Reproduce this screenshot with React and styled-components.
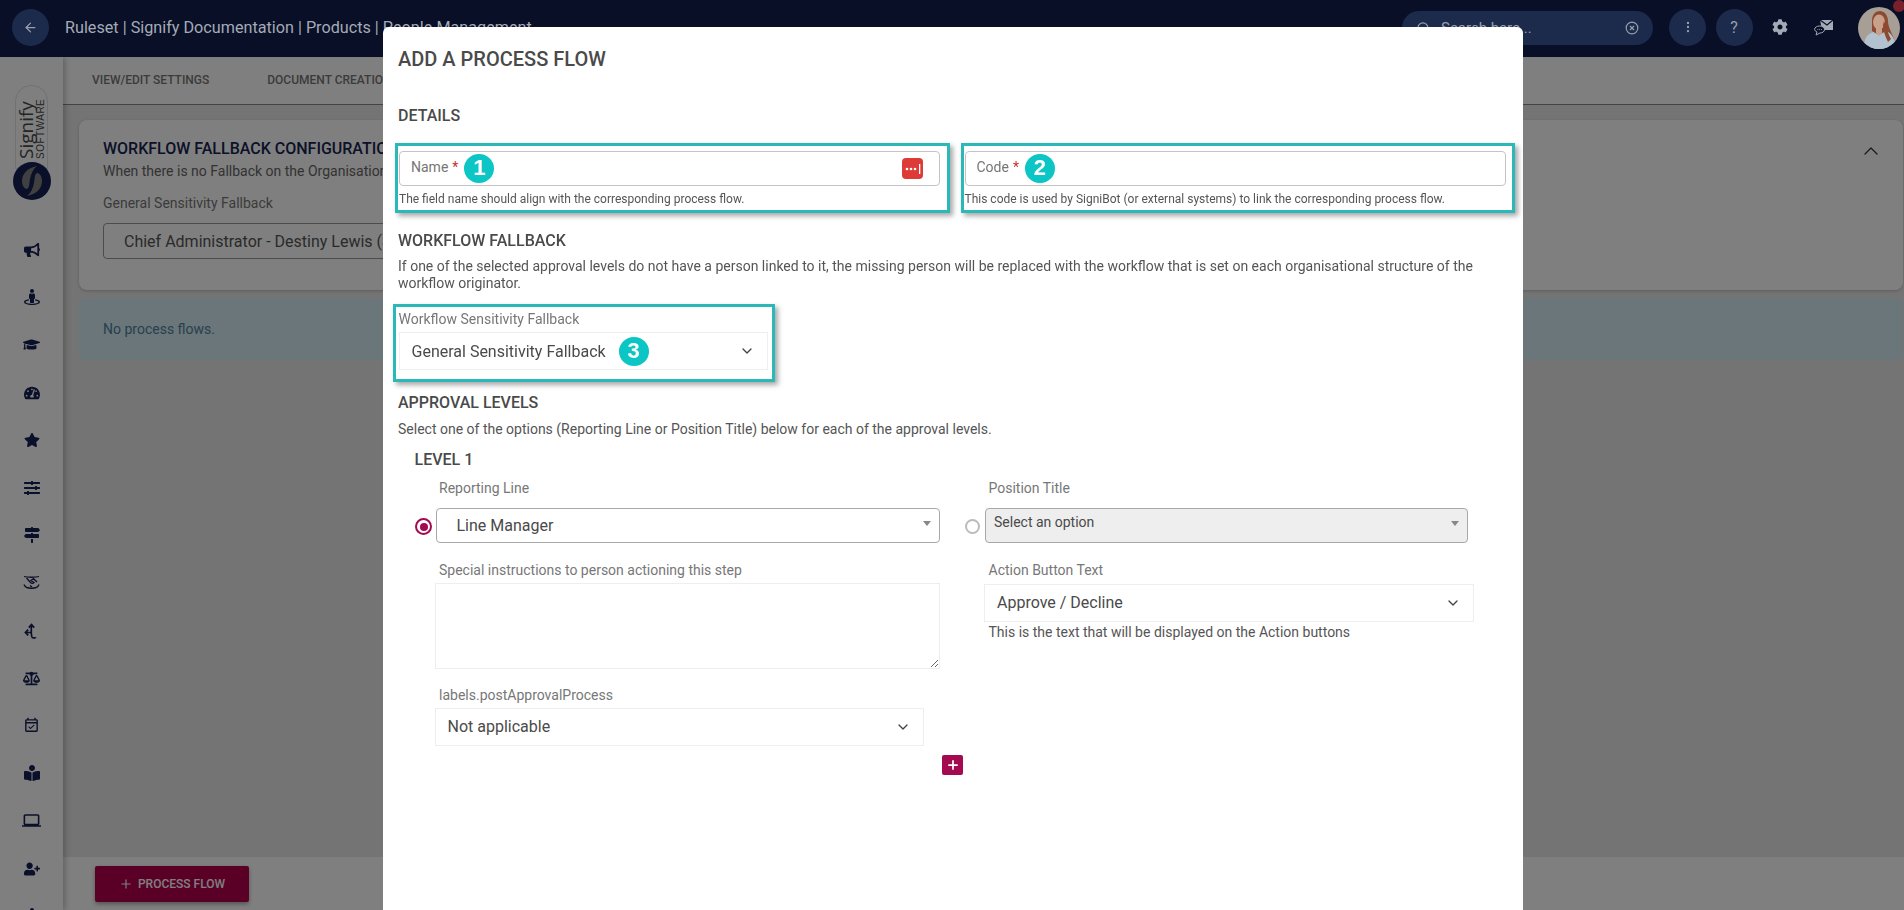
import React from 'react';
import styled, { createGlobalStyle } from 'styled-components';
import { ArrowLeft, Search, CircleX, EllipsisVertical, ChevronDown, ChevronUp, Plus } from 'lucide-react';
import {
  FaBullhorn, FaStreetView, FaGraduationCap, FaTachometerAlt, FaStar, FaSlidersH, FaMapSigns,
  FaBalanceScale, FaBookReader, FaUserPlus, FaCog,
} from 'react-icons/fa';
import { MdOutlineEventAvailable, MdLaptop } from 'react-icons/md';

const GlobalStyle = createGlobalStyle`
  html, body, #root {
    margin: 0;
    height: 100%;
  }
  body {
    overflow: hidden;
    font-family: Roboto, "Liberation Sans", sans-serif;
    background: #fff;
  }
  * {
    box-sizing: border-box;
  }
`;

const Page = styled.div`
  height: 910px;
  display: flex;
  flex-direction: column;
  overflow: hidden;
`;

/* sits above the backdrop: the reference keeps its bar brighter than the dimmed page */
const TopBar = styled.header`
  position: relative;
  z-index: 2;
  flex: none;
  height: 57px;
  background: #080f26;
  display: flex;
  align-items: center;
  padding: 0 0 3px 12px;
  color: #a4abb6;
`;

const RoundButton = styled.div`
  flex: none;
  width: 37px;
  height: 37px;
  border-radius: 50%;
  background: #1c2a4b;
  display: flex;
  align-items: center;
  justify-content: center;
  color: #98a0ae;
  font-size: 16px;
  margin-left: ${(p) => p.$left || 0}px;
`;

const PageTitle = styled.div`
  margin-left: 16px;
  font-size: 16.2px;
  white-space: nowrap;
`;

const SearchBox = styled.div`
  flex: none;
  margin-left: auto;
  margin-top: 2px;
  width: 251px;
  height: 34px;
  border-radius: 17px;
  background: #1c2a4b;
  display: flex;
  align-items: center;
  padding: 0 14px;
  gap: 10px;
  font-size: 15px;
  color: #98a0ae;
`;

const SearchText = styled.span`
  flex: 1;
`;

const BarIcon = styled.div`
  flex: none;
  margin-left: ${(p) => p.$left}px;
  display: flex;
  color: #a4abb6;
`;

const AvatarWrap = styled.div`
  position: relative;
  flex: none;
  width: 42px;
  height: 42px;
  margin-left: 24.5px;
  margin-right: 4px;
  margin-top: 2px;
`;

const NoticeDot = styled.span`
  position: absolute;
  top: -7px;
  right: -5px;
  width: 12px;
  height: 12px;
  border-radius: 50%;
  background: #7a1f2c;
`;

const Body = styled.div`
  flex: 1;
  min-height: 0;
  display: flex;
`;

const Sidebar = styled.nav`
  flex: none;
  width: 63px;
  background: #fff;
  display: flex;
  flex-direction: column;
  align-items: center;
  padding-top: 28px;
  box-shadow: 2px 0 6px rgba(0, 0, 0, 0.25);
  position: relative;
  z-index: 1;
`;

const LogoPill = styled.div`
  flex: none;
  width: 33px;
  height: 84px;
  border: 1px solid #e2e2e2;
  border-radius: 16px 16px 0 0;
  display: flex;
  flex-direction: row;
  justify-content: center;
  padding-top: 11px;
  color: #4a4a4a;
`;

const LogoWord = styled.div`
  writing-mode: vertical-rl;
  transform: rotate(180deg);
  white-space: nowrap;
  font-family: "Open Sans", sans-serif;
  font-size: 19px;
  line-height: 19px;
  height: 62px;
`;

const LogoSub = styled.div`
  writing-mode: vertical-rl;
  transform: rotate(180deg);
  white-space: nowrap;
  font-family: "Liberation Sans", sans-serif;
  font-size: 10px;
  letter-spacing: 0.5px;
  line-height: 10px;
  height: 62px;
`;

const LogoMark = styled.svg`
  width: 38px;
  height: 38px;
  margin-top: -7px;
  flex: none;
  position: relative;
`;

const NavList = styled.div`
  flex: none;
  margin-top: 26px;
  display: flex;
  flex-direction: column;
  align-items: center;
  color: #142052;
`;

const NavItem = styled.div`
  flex: none;
  height: 47.6px;
  display: flex;
  align-items: center;
  justify-content: center;
  font-size: 16px;
`;

const Main = styled.main`
  flex: 1;
  min-width: 0;
  display: flex;
  flex-direction: column;
  background: #e8e8e8;
`;

const Tabs = styled.div`
  flex: none;
  height: 48px;
  background: #fff;
  border-bottom: 1px solid #888;
  display: flex;
  align-items: center;
  padding-left: 29px;
  gap: 58px;
  font-size: 12px;
  font-weight: 500;
  color: #777;
  padding-bottom: 1px;
`;

const Content = styled.div`
  flex: 1;
  min-height: 0;
  padding: 15px 1px 0 16px;
`;

const ConfigCard = styled.section`
  height: 170px;
  background: #fff;
  border-radius: 8px;
  padding: 19px 20px 0 24px;
  box-shadow: 0 1px 3px rgba(0, 0, 0, 0.2);
  display: flex;
  justify-content: space-between;
`;

const CardTitle = styled.div`
  font-size: 16px;
  font-weight: 500;
  line-height: 20px;
  color: #16244f;
`;

const CardText = styled.div`
  margin-top: 4px;
  font-size: 14px;
  line-height: 17px;
  color: #666;
`;

const CardLabel = styled.div`
  margin-top: 15px;
  font-size: 14px;
  line-height: 17px;
  color: #777;
`;

const CardSelect = styled.div`
  margin-top: 11px;
  width: 620px;
  height: 36px;
  border: 1px solid #999;
  border-radius: 4px;
  padding-left: 20px;
  display: flex;
  align-items: center;
  font-size: 16px;
  color: #555;
`;

const InfoBox = styled.div`
  margin-top: 8px;
  height: 62px;
  background: #d4edf5;
  border-radius: 6px;
  padding-left: 24px;
  display: flex;
  align-items: center;
  font-size: 14px;
  color: #4f8098;
`;

const BottomBar = styled.div`
  flex: none;
  height: 53px;
  background: #fff;
  padding: 9px 0 0 32px;
`;

const PrimaryButton = styled.div`
  width: 154px;
  height: 36px;
  background: #b4004e;
  border-radius: 2px;
  color: #fff;
  font-size: 12px;
  font-weight: 500;
  display: flex;
  align-items: center;
  justify-content: center;
  gap: 5px;
  box-shadow: 0 2px 4px rgba(0, 0, 0, 0.35);
`;

const Backdrop = styled.div`
  position: fixed;
  inset: 0;
  z-index: 1;
  background: rgba(0, 0, 0, 0.5);
`;

const Modal = styled.div`
  position: fixed;
  z-index: 3;
  left: 383px;
  top: 27px;
  width: 1140px;
  height: 900px;
  background: #fff;
  border-radius: 6px 6px 0 0;
  padding: 21px 15px 0;
  color: #555;
`;

const ModalTitle = styled.h1`
  margin: 0;
  font-size: 20px;
  font-weight: 500;
  line-height: 22px;
  color: #4a4a4a;
`;

const SectionTitle = styled.h2`
  margin: ${(p) => p.$top}px 0 0;
  font-size: 16px;
  font-weight: 500;
  line-height: 20px;
  color: #4a4a4a;
  padding-left: ${(p) => p.$indent || 0}px;
`;

const Paragraph = styled.p`
  margin: ${(p) => p.$top}px 0 0;
  font-size: 14px;
  line-height: 17px;
  color: #555;
`;

const FieldRow = styled.div`
  margin-top: 16.5px;
  margin-left: -3.5px;
  display: flex;
  gap: 11px;
`;

const Highlight = styled.div`
  flex: none;
  border: 3px solid #2bb8b8;
  box-shadow: 3px 3px 5px rgba(0, 0, 0, 0.35);
  background: #fff;
  width: ${(p) => p.$width}px;
  height: ${(p) => p.$height}px;
  padding: ${(p) => p.$pad};
`;

const FallbackHighlight = styled(Highlight)`
  margin: 12px 0 0 -5.5px;
`;

const InputBox = styled.div`
  height: 35px;
  border: 1px solid #c4c4c4;
  border-radius: 4px;
  display: flex;
  align-items: center;
  padding-left: 11px;
  font-size: 14px;
  color: #757575;
`;

const FloatLabel = styled.span`
  margin-top: -3px;
`;

const Required = styled.span`
  color: #c9302c;
  margin-left: 4px;
`;

const Badge = styled.span`
  flex: none;
  width: 30px;
  height: 29px;
  border-radius: 50%;
  background: #0cc5c5;
  color: #fff;
  font-family: "Liberation Sans", sans-serif;
  font-size: 22px;
  font-weight: 700;
  display: flex;
  align-items: center;
  justify-content: center;
  margin-left: ${(p) => p.$left}px;
`;

const PasswordIcon = styled.svg`
  flex: none;
  width: 21px;
  height: 21px;
  margin-left: auto;
  margin-right: 16px;
`;

const HelpText = styled.div`
  margin-top: 6px;
  font-size: 12px;
  line-height: 15px;
  color: #555;
`;

const FieldLabel = styled.div`
  font-size: 14px;
  line-height: 17px;
  color: ${(p) => p.$color || '#777'};
  padding-left: ${(p) => p.$indent || 0}px;
  margin-top: ${(p) => p.$top || 0}px;
`;

const PlainSelect = styled.div`
  height: ${(p) => p.$height || 38}px;
  width: ${(p) => p.$width}px;
  margin-top: ${(p) => p.$top || 5}px;
  margin-left: ${(p) => p.$left || 0}px;
  border: 1px solid #eee;
  display: flex;
  align-items: center;
  padding: 0 ${(p) => p.$padRight || 12}px 0 ${(p) => p.$padLeft}px;
  font-size: 16px;
  color: #4a4a4a;
`;

const Chevron = styled(ChevronDown)`
  flex: none;
  margin-left: auto;
  color: #444;
`;

const LevelGrid = styled.div`
  margin: 9.5px 0 0 17px;
  display: flex;
  gap: 25px;
`;

const LevelColumn = styled.div`
  width: ${(p) => p.$width}px;
  flex: none;
`;

const RadioRow = styled.div`
  margin-top: 11.5px;
  display: flex;
  align-items: center;
`;

const Radio = styled.span`
  flex: none;
  width: ${(p) => p.$size}px;
  height: ${(p) => p.$size}px;
  border-radius: 50%;
  border: 2px solid ${(p) => (p.$on ? '#a30a50' : '#bbb')};
  margin-top: 2px;
  display: flex;
  align-items: center;
  justify-content: center;
  &::after {
    content: '';
    width: 8px;
    height: 8px;
    border-radius: 50%;
    background: ${(p) => (p.$on ? '#a30a50' : 'transparent')};
  }
`;

const BoxSelect = styled.div`
  height: 35px;
  width: ${(p) => p.$width}px;
  margin-left: ${(p) => p.$left}px;
  border: 1px solid #a8a8a8;
  border-radius: 4px;
  background: ${(p) => (p.$disabled ? '#eee' : '#fff')};
  display: flex;
  padding: ${(p) => (p.$disabled ? '5px 8px' : '0 8px 0 20px')};
  align-items: ${(p) => (p.$disabled ? 'flex-start' : 'center')};
  font-size: ${(p) => (p.$disabled ? 14 : 16)}px;
  line-height: 17px;
  color: #4a4a4a;
  position: relative;
`;

const Caret = styled.span`
  position: absolute;
  right: 8px;
  top: 12px;
  width: 0;
  height: 0;
  border-left: 4px solid transparent;
  border-right: 4px solid transparent;
  border-top: 5px solid #888;
`;

const NoteArea = styled.textarea`
  display: block;
  width: 505px;
  height: 85.5px;
  margin: 4.5px 0 0 19.5px;
  border: 1px solid #eee;
  background: #fff;
  outline: none;
`;

const AddButton = styled.div`
  width: 21px;
  height: 20px;
  margin: 9px 0 0 544px;
  background: #a30a50;
  border-radius: 2px;
  color: #fff;
  display: flex;
  align-items: center;
  justify-content: center;
`;

const navIcons = [
  <FaBullhorn key="a" />,
  <FaStreetView key="b" />,
  <FaGraduationCap key="c" size={17} />,
  <FaTachometerAlt key="d" />,
  <FaStar key="e" />,
  <FaSlidersH key="f" />,
  <FaMapSigns key="g" />,
  <svg key="h" width="17" height="15" viewBox="0 0 17 15" fill="none" stroke="currentColor" strokeWidth="1.3">
    <path d="M1 1.500c3 1 12 1 15 0M1 9.500c1.500 5 13.500 5 15 0" />
    <path d="M3.500 3l4 4.500c1 1 2.500 1 3.500 0L8 5.500l2.500-1.800 3.500 3.300M7 10.500l2 1.500" />
  </svg>,
  <svg key="i" width="16" height="16" viewBox="0 0 16 16" fill="none" stroke="currentColor" strokeWidth="1.7">
    <path d="M8.500 15c2.500 0 3-.5 3.500 0M8.500 15c-1-1-1.200-3-1.200-5V2M4.800 4.600 7.500 1.600l2.700 3M7.300 9.500H1.800M4.200 6.600 1.400 9.500l2.800 2.900" />
  </svg>,
  <FaBalanceScale key="j" size={17} />,
  <MdOutlineEventAvailable key="k" size={17} />,
  <FaBookReader key="l" />,
  <MdLaptop key="m" size={19} />,
  <FaUserPlus key="n" />,
  <FaStreetView key="o" />,
];

const App = () => {
  return (
    <>
      <GlobalStyle />
      <Page>
        <TopBar>
          <RoundButton><ArrowLeft size={15} /></RoundButton>
          <PageTitle>Ruleset | Signify Documentation | Products | People Management</PageTitle>
          <SearchBox>
            <Search size={15} />
            <SearchText>Search here...</SearchText>
            <CircleX size={14} />
          </SearchBox>
          <RoundButton $left={16}><EllipsisVertical size={14} /></RoundButton>
          <RoundButton $left={9.5}>?</RoundButton>
          <BarIcon $left={19}><FaCog size={16} /></BarIcon>
          <BarIcon $left={26}>
            <svg width="20" height="18" viewBox="0 0 20 18" fill="none">
              <path d="M6 2h13v10H8z" fill="currentColor" />
              <path d="M6 2l7 5 6-5" stroke="#080f26" strokeWidth="1.2" />
              <path d="M5.500 8c3 0 5 1.400 5 3.500S8.500 15 6 15l-4 2 1-3c-1.500-.8-2.400-1.500-2.400-2.700C.6 9.400 3 8 5.500 8z" fill="#080f26" stroke="currentColor" strokeWidth="1" />
              <path d="M3.500 11.500h.8M5.300 11.500h.8M7.100 11.500h.8" stroke="currentColor" strokeWidth="1" />
            </svg>
          </BarIcon>
          <AvatarWrap>
            <svg width="42" height="42" viewBox="0 0 42 42">
              <defs>
                <clipPath id="avatarClip"><circle cx="21" cy="21" r="21" /></clipPath>
              </defs>
              <g clipPath="url(#avatarClip)">
                <rect width="42" height="42" fill="#a79f96" />
                <path d="M14 14c0-7 4-10 8-10s8 4 8 10c0 6 4 12 6 18l-6 2-16-10z" fill="#8d4a30" />
                <ellipse cx="21" cy="15" rx="6" ry="7.500" fill="#c9a08c" />
                <path d="M6 42c0-10 2-14 9-17l6 3 7-4c6 2 9 8 10 18z" fill="#b3c2cf" />
                <path d="M18 21h6v5l-3 3-3-3z" fill="#c9a08c" />
                <path d="M26 14c2 5 3 10 7 18l-3 3c-3-6-5-12-5-17z" fill="#8d4a30" />
              </g>
            </svg>
            <NoticeDot />
          </AvatarWrap>
        </TopBar>
        <Body>
          <Sidebar>
            <LogoPill>
              <LogoWord>Signify</LogoWord>
              <LogoSub>SOFTWARE</LogoSub>
            </LogoPill>
            <LogoMark viewBox="0 0 38 38">
              <circle cx="19" cy="19" r="19" fill="#142052" />
              <path d="M24 4C14 6 9 12 9 19c0 4 2 8 5 8 3-2 2-6 3-10 1-5 3-10 7-13z" fill="#808080" />
              <path d="M14 34c10-2 15-8 15-15 0-4-2-8-5-8-3 2-2 6-3 10-1 5-3 10-7 13z" fill="#808080" />
            </LogoMark>
            <NavList>
              {navIcons.map((icon, index) => (
                <NavItem key={index}>{icon}</NavItem>
              ))}
            </NavList>
          </Sidebar>
          <Main>
            <Tabs>
              <span>VIEW/EDIT SETTINGS</span>
              <span>DOCUMENT CREATION</span>
            </Tabs>
            <Content>
              <ConfigCard>
                <div>
                  <CardTitle>WORKFLOW FALLBACK CONFIGURATION</CardTitle>
                  <CardText>When there is no Fallback on the Organisational Structure</CardText>
                  <CardLabel>General Sensitivity Fallback</CardLabel>
                  <CardSelect>Chief Administrator - Destiny Lewis (Signify)</CardSelect>
                </div>
                <ChevronUp size={24} strokeWidth={1.3} color="#333" />
              </ConfigCard>
              <InfoBox>No process flows.</InfoBox>
            </Content>
            <BottomBar>
              <PrimaryButton><Plus size={14} />PROCESS FLOW</PrimaryButton>
            </BottomBar>
          </Main>
        </Body>
        <Backdrop />
        <Modal>
          <ModalTitle>ADD A PROCESS FLOW</ModalTitle>
          <SectionTitle $top={36}>DETAILS</SectionTitle>
          <FieldRow>
            <Highlight $width={555} $height={70} $pad="5px 7px 0 1.5px">
              <InputBox>
                <FloatLabel>Name<Required>*</Required></FloatLabel>
                <Badge $left={6}>1</Badge>
                <PasswordIcon viewBox="0 0 21 21">
                  <rect width="21" height="21" rx="4" fill="#dd3b37" />
                  <circle cx="5" cy="11" r="1.3" fill="#fff" />
                  <circle cx="9" cy="11" r="1.3" fill="#fff" />
                  <circle cx="13" cy="11" r="1.3" fill="#fff" />
                  <rect x="17" y="6" width="1.3" height="10" fill="#fff" />
                </PasswordIcon>
              </InputBox>
              <HelpText>The field name should align with the corresponding process flow.</HelpText>
            </Highlight>
            <Highlight $width={554} $height={70} $pad="5px 6px 0 1px">
              <InputBox>
                <FloatLabel>Code<Required>*</Required></FloatLabel>
                <Badge $left={6}>2</Badge>
              </InputBox>
              <HelpText>This code is used by SigniBot (or external systems) to link the corresponding process flow.</HelpText>
            </Highlight>
          </FieldRow>
          <SectionTitle $top={18}>WORKFLOW FALLBACK</SectionTitle>
          <Paragraph $top={7.5}>
            If one of the selected approval levels do not have a person linked to it, the missing person will be replaced with the workflow that is set on each organisational structure of the workflow originator.
          </Paragraph>
          <FallbackHighlight $width={382} $height={78} $pad="4px 3px 0 3px">
            <FieldLabel>Workflow Sensitivity Fallback</FieldLabel>
            <PlainSelect $width={369} $padLeft={12} $padRight={12} $top={4}>
              General Sensitivity Fallback
              <Badge $left={13}>3</Badge>
              <Chevron size={16} />
            </PlainSelect>
          </FallbackHighlight>
          <SectionTitle $top={11}>APPROVAL LEVELS</SectionTitle>
          <Paragraph $top={8}>Select one of the options (Reporting Line or Position Title) below for each of the approval levels.</Paragraph>
          <SectionTitle $top={12} $indent={16.5}>LEVEL 1</SectionTitle>
          <LevelGrid>
            <LevelColumn $width={525}>
              <FieldLabel $indent={24}>Reporting Line</FieldLabel>
              <RadioRow>
                <Radio $on $size={17} />
                <BoxSelect $width={505} $left={3.5}>
                  Line Manager
                  <Caret />
                </BoxSelect>
              </RadioRow>
              <FieldLabel $indent={24} $top={18.5}>Special instructions to person actioning this step</FieldLabel>
              <NoteArea />
              <FieldLabel $indent={24} $top={18}>labels.postApprovalProcess</FieldLabel>
              <PlainSelect $width={489} $left={19.5} $padLeft={12} $top={4}>
                Not applicable
                <Chevron size={16} />
              </PlainSelect>
            </LevelColumn>
            <LevelColumn $width={510}>
              <FieldLabel $indent={23.5}>Position Title</FieldLabel>
              <RadioRow>
                <Radio $size={15} />
                <BoxSelect $width={483} $left={5} $disabled>
                  Select an option
                  <Caret />
                </BoxSelect>
              </RadioRow>
              <FieldLabel $indent={23.5} $top={18.5}>Action Button Text</FieldLabel>
              <PlainSelect $width={490} $left={19} $padLeft={12} $padRight={12}>
                Approve / Decline
                <Chevron size={16} />
              </PlainSelect>
              <FieldLabel $indent={23.5} $top={2} $color="#555">This is the text that will be displayed on the Action buttons</FieldLabel>
            </LevelColumn>
          </LevelGrid>
          <AddButton><Plus size={14} strokeWidth={3} /></AddButton>
        </Modal>
      </Page>
    </>
  );
};

export default App;
